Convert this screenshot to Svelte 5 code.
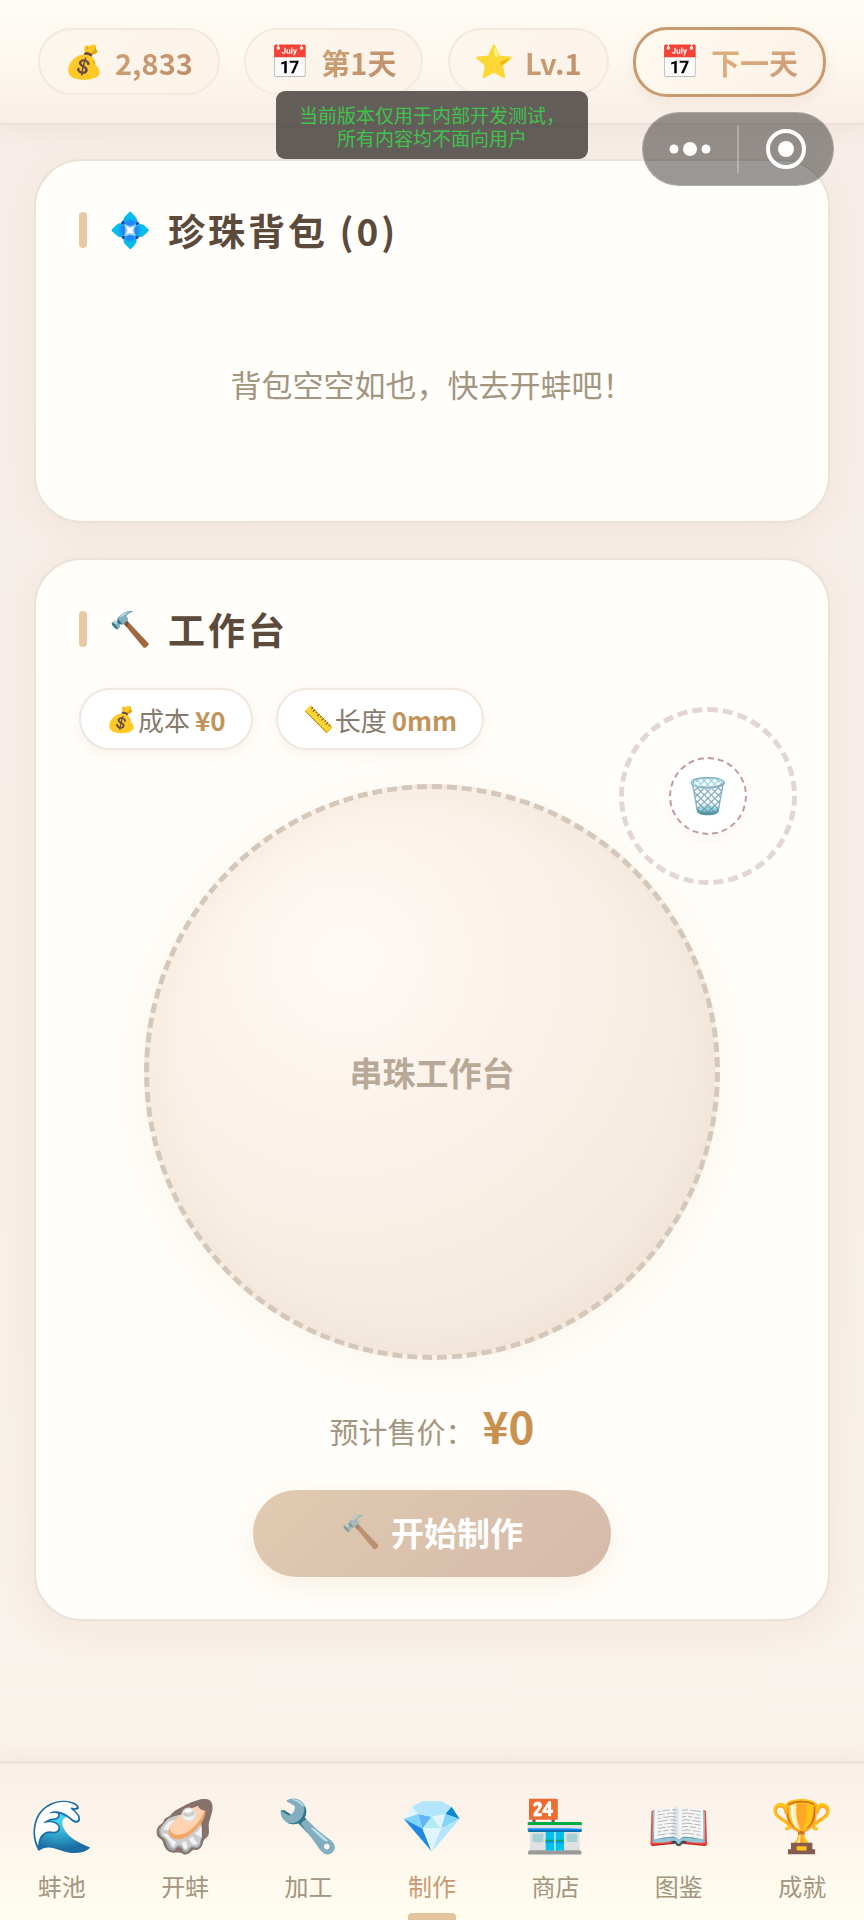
<script>
  const stats = [
    { icon: '💰', text: '2,833' },
    { icon: '📅', text: '第1天' },
    { icon: '⭐', text: 'Lv.1' }
  ];
  const chips = [
    { icon: '💰', label: '成本', value: '¥0' },
    { icon: '📏', label: '长度', value: '0mm' }
  ];
  const tabs = [
    { icon: '🌊', label: '蚌池' },
    { icon: '🦪', label: '开蚌' },
    { icon: '🔧', label: '加工' },
    { icon: '💎', label: '制作' },
    { icon: '🏪', label: '商店' },
    { icon: '📖', label: '图鉴' },
    { icon: '🏆', label: '成就' }
  ];
  let active = $state('制作');
</script>

<div class="page">
  <header>
    {#each stats as s}
      <div class="stat"><span class="emoji">{s.icon}</span><b>{s.text}</b></div>
    {/each}
    <button class="stat next"><span class="emoji">📅</span><b>下一天</b></button>
  </header>

  <p class="notice">当前版本仅用于内部开发测试，<br />所有内容均不面向用户</p>

  <div class="capsule">
    <button aria-label="更多">
      <svg width="42" height="16" viewBox="0 0 42 16" fill="#fff"><circle cx="5" cy="8" r="4.5" /><circle cx="21" cy="8" r="7" /><circle cx="37" cy="8" r="4.5" /></svg>
    </button>
    <i></i>
    <button aria-label="关闭">
      <svg width="40" height="40" viewBox="0 0 40 40"><circle cx="20" cy="20" r="18" fill="none" stroke="#fff" stroke-width="4" /><circle cx="20" cy="20" r="8" fill="#fff" /></svg>
    </button>
  </div>

  <main>
    <section class="card">
      <h2><span class="emoji">💠</span>珍珠背包 (0)</h2>
      <p class="empty">背包空空如也，快去开蚌吧！</p>
    </section>

    <section class="card bench">
      <h2><span class="emoji">🔨</span>工作台</h2>
      <div class="chips">
        {#each chips as c}
          <div class="chip"><span class="emoji">{c.icon}</span><span>{c.label}</span><b>{c.value}</b></div>
        {/each}
      </div>
      <button class="trash" aria-label="移除"><span class="emoji">🗑️</span></button>
      <div class="plate">串珠工作台</div>
      <p class="price">预计售价：<b>¥0</b></p>
      <button class="make"><span class="emoji">🔨</span>开始制作</button>
    </section>
  </main>

  <nav>
    {#each tabs as t}
      <button class:active={active === t.label} onclick={() => (active = t.label)}>
        <span class="emoji">{t.icon}</span><span>{t.label}</span>
      </button>
    {/each}
  </nav>
</div>

<style>
  :global(body) { margin: 0; }
  * { box-sizing: border-box; }
  .page {
    position: relative;
    min-height: 100vh;
    display: flex;
    flex-direction: column;
    font-family: 'Noto Sans CJK SC', 'Noto Color Emoji', sans-serif;
    color: #a39580;
    background: linear-gradient(180deg, #f7eee9, #f7efe9 60%, #faf3ec);
    overflow: hidden;
  }
  button {
    font: inherit;
    color: inherit;
    border: 0;
    padding: 0;
    margin: 0;
    background: none;
    cursor: pointer;
  }
  p, h2 { margin: 0; }
  .emoji {
    display: inline-flex;
    justify-content: center;
    flex: none;
    font-family: 'Noto Color Emoji', sans-serif;
    font-weight: 400;
    line-height: 1;
    letter-spacing: 0;
  }

  header {
    display: flex;
    justify-content: space-between;
    align-items: center;
    height: 125px;
    padding: 0 38px;
    border-bottom: 2px solid #ebe0da;
    background: linear-gradient(180deg, #fffcf5, #fef9f1 45%, #f9eee7);
    box-shadow: 0 4px 24px rgba(190, 150, 120, 0.14);
  }
  .stat {
    display: flex;
    align-items: center;
    gap: 12px;
    height: 67px;
    padding: 0 25px;
    border: 2px solid #f3e9dd;
    border-radius: 34px;
    background: linear-gradient(135deg, #fdf7ee, #fcf2e8);
    font-size: 29px;
  }
  .stat .emoji { width: 38px; font-size: 32px; }
  .stat b {
    color: transparent;
    background: linear-gradient(135deg, #cfa273, #bd8d6c);
    background-clip: text;
  }
  .next {
    height: 70px;
    border: 3px solid #c79a70;
    background: linear-gradient(135deg, #fffaf0, #fdf1e6);
    box-shadow: 0 4px 14px rgba(200, 155, 110, 0.16);
  }
  .next b { background-image: linear-gradient(135deg, #e0b27f, #cd9a76); }

  .notice {
    position: absolute;
    z-index: 2;
    top: 91px;
    left: 50%;
    width: 312px;
    margin-left: -156px;
    padding: 12px 0 10px;
    border-radius: 9px;
    background: rgba(58, 53, 50, 0.78);
    color: #3fc34d;
    font-size: 19px;
    line-height: 23px;
    text-align: center;
  }
  .capsule {
    position: absolute;
    z-index: 2;
    top: 112px;
    right: 30px;
    width: 192px;
    height: 74px;
    border-radius: 37px;
    border: 1px solid rgba(255, 255, 255, 0.2);
    background: rgba(0, 0, 0, 0.4);
    display: flex;
    align-items: center;
  }
  .capsule button { flex: 1; display: flex; justify-content: center; }
  .capsule i { width: 2px; height: 48px; background: rgba(255, 255, 255, 0.28); }

  main {
    display: flex;
    flex-direction: column;
    gap: 35px;
    padding: 34px 34px 0;
  }
  .card {
    position: relative;
    padding: 36px 43px 0;
    border: 2px solid #ece2d9;
    border-radius: 48px;
    background: #fffefa;
    min-height: 364px;
    box-shadow: 0 8px 36px rgba(205, 160, 125, 0.14);
  }
  .bench {
    display: flex;
    flex-direction: column;
    align-items: center;
    padding-bottom: 42px;
  }
  h2 {
    display: flex;
    align-items: center;
    align-self: stretch;
    height: 66px;
    color: #5c4a3b;
    font-size: 37px;
    font-weight: 700;
    letter-spacing: 3px;
  }
  h2::before {
    content: '';
    width: 8px;
    height: 36px;
    margin-right: 23px;
    border-radius: 4px;
    background: #e7caa1;
  }
  h2 .emoji { width: 42px; font-size: 34px; margin-right: 16px; }
  .empty {
    padding: 98px 0 88px;
    font-size: 31px;
    line-height: 46px;
    text-align: center;
  }

  .chips { display: flex; align-self: stretch; gap: 23px; margin-top: 26px; }
  .chip {
    display: flex;
    align-items: center;
    height: 62px;
    padding: 0 25px;
    border: 2px solid #efe8e0;
    border-radius: 31px;
    background: #fff;
    color: #87796b;
    font-size: 26px;
    box-shadow: 0 4px 14px rgba(205, 160, 125, 0.12);
  }
  .chip .emoji { width: 32px; font-size: 25px; }
  .chip b { margin-left: 5px; color: #c2935a; }
  .trash {
    position: absolute;
    top: 147px;
    right: 31px;
    z-index: 1;
    width: 178px;
    height: 178px;
    border: 5px dashed #e3d6d4;
    border-radius: 50%;
    background: #fffefd;
    display: grid;
    place-items: center;
  }
  .trash .emoji {
    width: 78px;
    height: 78px;
    align-items: center;
    border: 2px dashed #c49a9c;
    border-radius: 50%;
    background: #fff;
    font-size: 35px;
    box-shadow: 0 4px 14px rgba(205, 160, 150, 0.1);
  }
  .plate {
    display: grid;
    place-items: center;
    width: 576px;
    max-width: 100%;
    aspect-ratio: 1;
    margin-top: 34px;
    border: 5px dashed #d5c8bb;
    border-radius: 50%;
    background: radial-gradient(circle at 35% 30%, #fffaf6, #fcf4ec 25%, #f6ede2 60%, #f0e4d8);
    box-shadow: 0 8px 44px rgba(225, 180, 130, 0.12), inset 0 0 44px rgba(225, 195, 165, 0.18);
    color: #b7a897;
    font-size: 33px;
    font-weight: 700;
  }
  .price {
    display: flex;
    align-items: baseline;
    margin-top: 32px;
    font-size: 29px;
    line-height: 66px;
  }
  .price b { margin-left: 8px; color: #c8914f; font-size: 44px; }
  .make {
    display: flex;
    align-items: center;
    justify-content: center;
    gap: 10px;
    width: 358px;
    height: 87px;
    margin-top: 26px;
    padding-bottom: 4px;
    border-radius: 44px;
    background: linear-gradient(135deg, #e1cbb1, #dac2ad 50%, #d6baaa);
    box-shadow: 0 8px 28px rgba(220, 175, 125, 0.18);
    color: #fff;
    font-size: 33px;
    font-weight: 700;
  }
  .make .emoji { width: 40px; font-size: 32px; opacity: 0.55; }

  nav {
    display: grid;
    grid-template-columns: repeat(7, 1fr);
    height: 159px;
    margin-top: auto;
    border-top: 3px solid #ece2da;
    background: linear-gradient(180deg, #f9efe7, #fdf5ec 45%, #fffeef);
    box-shadow: 0 -4px 20px rgba(190, 150, 120, 0.1);
  }
  nav button {
    position: relative;
    display: flex;
    flex-direction: column;
    align-items: center;
    padding-top: 33px;
    font-size: 24px;
    line-height: 36px;
  }
  nav .emoji { height: 71px; font-size: 51px; line-height: 60px; }
  nav .active { color: #c69a74; }
  nav .active::after {
    content: '';
    position: absolute;
    bottom: 0;
    width: 48px;
    height: 7px;
    border-radius: 4px 4px 0 0;
    background: #e3c49c;
  }
</style>
